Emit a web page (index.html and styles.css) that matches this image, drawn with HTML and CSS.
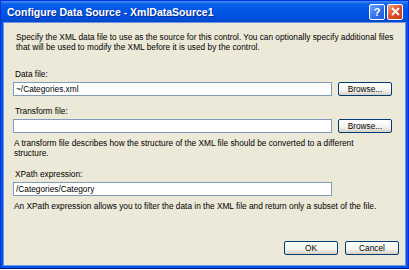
FILE: index.html
```html
<!DOCTYPE html>
<html lang="en">
<head>
    <meta charset="UTF-8">
    <title>Configure Data Source - XmlDataSource1</title>
    <link rel="stylesheet" href="styles.css">
</head>
<body>
    <div class="window">
        <div class="titlebar">
            <span class="title">Configure Data Source - XmlDataSource1</span>
            <span class="tb-btn help">?</span>
            <span class="tb-btn close">
                <svg width="9" height="9" viewBox="0 0 9 9"><path d="M1 1 L8 8 M8 1 L1 8" stroke="#fff" stroke-width="1.8"/></svg>
            </span>
        </div>
        <div class="content">
            <p class="intro">Specify the XML data file to use as the source for this control. You can optionally specify additional files that will be used to modify the XML before it is used by the control.</p>

            <label class="label first">Data file:</label>
            <div class="field">
                <input class="text" type="text" value="~/Categories.xml">
                <button class="btn browse">Browse...</button>
            </div>

            <label class="label">Transform file:</label>
            <div class="field">
                <input class="text" type="text" value="">
                <button class="btn browse">Browse...</button>
            </div>
            <p class="note">A transform file describes how the structure of the XML file should be converted to a different structure.</p>

            <label class="label xpath">XPath expression:</label>
            <div class="field">
                <input class="text" type="text" value="/Categories/Category">
            </div>
            <p class="note">An XPath expression allows you to filter the data in the XML file and return only a subset of the file.</p>

            <div class="actions">
                <button class="btn">OK</button>
                <button class="btn">Cancel</button>
            </div>
        </div>
    </div>
</body>
</html>
```

FILE: styles.css
```css
body { margin: 0; padding: 0; font-family: "Liberation Sans", Arial, sans-serif; font-size: 8.3px; background: #fff; }

.window {
    width: 409px;
    height: 269px;
    box-sizing: border-box;
    background: #0055e5;
    border: 1px solid #0831d9;
    border-bottom-color: #00138c;
    display: flex;
    flex-direction: column;
}

.titlebar {
    height: 21px;
    display: flex;
    align-items: center;
    padding: 0 5px 0 6px;
    background: linear-gradient(#3c8ff8 0%, #0a5fe9 15%, #0055e5 45%, #0050dd 80%, #0046c8 100%);
}
.title {
    flex: 1;
    color: #fff;
    font-weight: bold;
    font-size: 10.5px;
    text-shadow: 1px 1px 0 #0a2a8a;
    padding-top: 1px;
}
.tb-btn {
    width: 14px;
    height: 14px;
    border: 1px solid #fff;
    border-radius: 2px;
    display: flex;
    align-items: center;
    justify-content: center;
    color: #fff;
    font-weight: bold;
    font-size: 11px;
    margin-left: 2px;
}
.help { background: linear-gradient(135deg, #6fa4ff, #2f6de8 60%, #1f57d6); }
.close { background: linear-gradient(135deg, #f0a080, #e0502a 50%, #c43a18); }

.content {
    flex: 1;
    margin: 0 2px 2px 2px;
    border: 1px solid #6b95e8;
    background: #ece9d8;
    padding: 0 6px 0 9px;
    display: flex;
    flex-direction: column;
}

p { margin: 0; line-height: 10px; }
.intro { margin-top: 9px; padding-left: 3px; padding-right: 2px; }
.note { padding-left: 1px; margin-top: 5px; max-width: 372px; }

.label { display: block; line-height: 10px; padding-left: 2px; margin-top: 10px; }
.label.first { margin-top: 17px; }
.label.xpath { margin-top: 11px; }

.field { display: flex; align-items: center; margin-top: 3px; height: 14px; }
.text {
    width: 319px;
    height: 14px;
    box-sizing: border-box;
    border: 1px solid #7f9db9;
    background: #fff;
    font-family: inherit;
    font-size: 8.3px;
    padding: 0 2px;
    margin: 0;
    outline: none;
}
.btn {
    width: 54px;
    height: 14px;
    box-sizing: border-box;
    border: 1px solid #003c74;
    border-radius: 2px;
    background: linear-gradient(#ffffff, #f4f3ee 60%, #d6d0c5);
    font-family: inherit;
    font-size: 8.3px;
    color: #000;
    padding: 0;
    margin: 0;
}
.browse { margin-left: 6px; }

.actions {
    margin-top: auto;
    margin-bottom: 10px;
    display: flex;
    justify-content: flex-end;
    gap: 7px;
}
```
